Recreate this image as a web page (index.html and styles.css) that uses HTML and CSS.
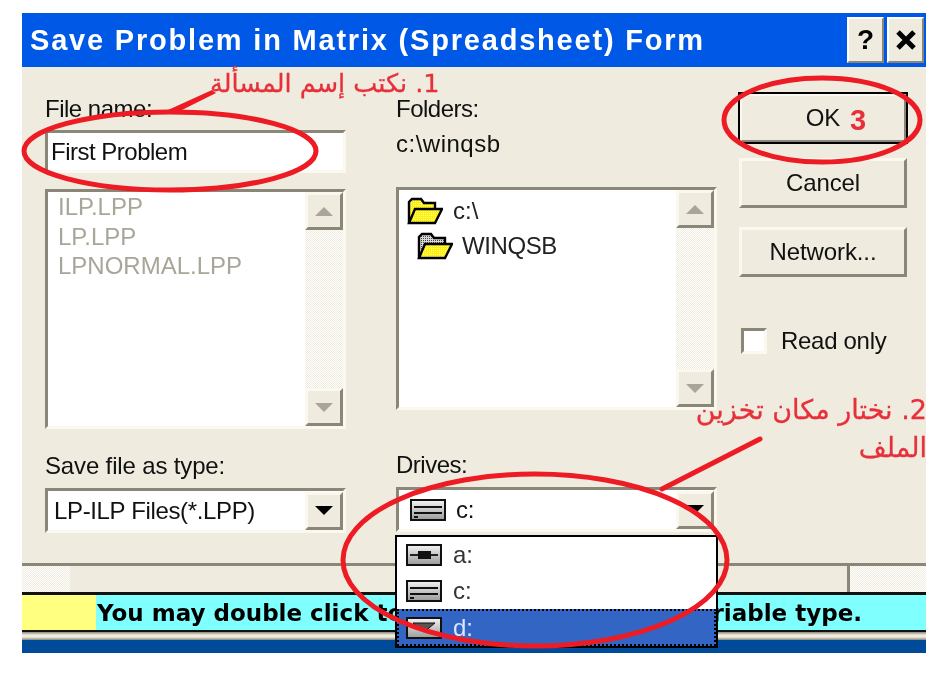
FILE: index.html
```html
<!DOCTYPE html>
<html lang="en">
<head>
    <meta charset="UTF-8">
    <meta name="viewport" content="width=device-width, initial-scale=1.0">
    <title>Save Problem in Matrix (Spreadsheet) Form</title>
    <link rel="stylesheet" href="styles.css">
</head>
<body>

    <!-- Shared icons -->
    <svg class="defs" width="0" height="0">
        <defs>
            <pattern id="dither" width="2" height="2" patternUnits="userSpaceOnUse">
                <rect width="2" height="2" fill="#fff200"/>
                <rect width="1" height="1" fill="#ffffb0"/>
            </pattern>
            <pattern id="ditherGrey" width="2" height="2" patternUnits="userSpaceOnUse">
                <rect width="2" height="2" fill="#d8d8d8"/>
                <rect width="1" height="1" fill="#444"/>
            </pattern>
            <linearGradient id="driveFace" x1="0" y1="0" x2="0" y2="1">
                <stop offset="0" stop-color="#f4f4f4"/>
                <stop offset="1" stop-color="#9a9a9a"/>
            </linearGradient>
            <symbol id="hdd" viewBox="0 0 36 22">
                <rect x="1" y="1" width="34" height="20" fill="url(#driveFace)" stroke="#111" stroke-width="2"/>
                <path d="M4 8h28M4 14h28" stroke="#111" stroke-width="2" fill="none"/>
                <path d="M4 18h4" stroke="#111" stroke-width="2" fill="none"/>
            </symbol>
            <symbol id="floppy" viewBox="0 0 36 22">
                <rect x="1" y="1" width="34" height="20" fill="url(#driveFace)" stroke="#111" stroke-width="2"/>
                <path d="M4 11h28" stroke="#222" stroke-width="2" fill="none"/>
                <rect x="12" y="7" width="13" height="8" fill="#111"/>
            </symbol>
            <symbol id="cdrom" viewBox="0 0 36 22">
                <rect x="1" y="1" width="34" height="20" fill="url(#driveFace)" stroke="#111" stroke-width="2"/>
                <path d="M7 6h22l-11 9z" fill="#555" stroke="#111"/>
            </symbol>
        </defs>
    </svg>

    <div class="dialog">
        <!-- Title bar -->
        <div class="titlebar">
            <h1>Save Problem in Matrix (Spreadsheet) Form</h1>
            <div class="caption-buttons">
                <span class="caption-btn">?</span>
                <span class="caption-btn">
                    <svg width="22" height="20" viewBox="0 0 22 20"><path d="M3 2l16 16M19 2L3 18" stroke="#000" stroke-width="5"/></svg>
                </span>
            </div>
        </div>

        <!-- Form body -->
        <div class="body">
            <div class="col col-file">
                <label class="label">File name:</label>
                <div class="input sunken">First Problem</div>
                <div class="list sunken">
                    <div class="list-items muted">
                        <div>ILP.LPP</div>
                        <div>LP.LPP</div>
                        <div>LPNORMAL.LPP</div>
                    </div>
                    <div class="scrollbar">
                        <span class="scroll-btn"><i class="arrow up"></i></span>
                        <span class="scroll-btn"><i class="arrow down"></i></span>
                    </div>
                </div>
                <label class="label type-label">Save file as type:</label>
                <div class="combo sunken">
                    <span class="combo-value">LP-ILP Files(*.LPP)</span>
                    <span class="scroll-btn"><i class="arrow down dark"></i></span>
                </div>
            </div>

            <div class="col col-folder">
                <label class="label">Folders:</label>
                <div class="path">c:\winqsb</div>
                <div class="list tree sunken">
                    <div class="list-items">
                        <div class="tree-row">
                            <svg width="36" height="28" viewBox="0 0 36 28">
                                <path d="M2 26V5l3-3h9l3 4h11v5" fill="url(#dither)" stroke="#000" stroke-width="2.4"/>
                                <path d="M2 26l6-14h27l-7 14z" fill="url(#dither)" stroke="#000" stroke-width="2.4"/>
                            </svg>
                            <span>c:\</span>
                        </div>
                        <div class="tree-row sub">
                            <svg width="36" height="28" viewBox="0 0 36 28">
                                <path d="M2 26V5l3-3h9l3 4h11v5" fill="url(#ditherGrey)" stroke="#000" stroke-width="2.4"/>
                                <path d="M2 26l6-14h27l-7 14z" fill="url(#dither)" stroke="#000" stroke-width="2.4"/>
                            </svg>
                            <span>WINQSB</span>
                        </div>
                    </div>
                    <div class="scrollbar">
                        <span class="scroll-btn"><i class="arrow up"></i></span>
                        <span class="scroll-btn"><i class="arrow down"></i></span>
                    </div>
                </div>
                <label class="label drives-label">Drives:</label>
                <div class="combo sunken">
                    <span class="combo-value drive">
                        <svg width="36" height="22"><use href="#hdd"/></svg>
                        c:
                    </span>
                    <span class="scroll-btn"><i class="arrow down dark"></i></span>
                </div>
            </div>

            <div class="col col-actions">
                <button class="btn btn-default">OK</button>
                <button class="btn">Cancel</button>
                <button class="btn">Network...</button>
                <div class="check">
                    <span class="checkbox sunken"></span>
                    <span>Read only</span>
                </div>
            </div>
        </div>

        <!-- Scrollbar behind the dialog -->
        <div class="hscroll">
            <span class="hscroll-left"></span>
            <span class="hscroll-mid"></span>
            <span class="hscroll-right"></span>
        </div>

        <!-- Status line, the middle of it is covered by the drive list -->
        <div class="status">
            <span class="status-flag"></span>
            <span class="status-text">You may double click to</span>
            <span class="status-text status-end">variable type.</span>
        </div>
        <div class="footer"></div>

        <!-- Open drive list -->
        <div class="dropdown">
            <div class="drive-row"><svg width="36" height="22"><use href="#floppy"/></svg>a:</div>
            <div class="drive-row"><svg width="36" height="22"><use href="#hdd"/></svg>c:</div>
            <div class="drive-row selected"><svg width="36" height="22"><use href="#cdrom"/></svg>d:</div>
        </div>

        <!-- Red hand annotations -->
        <p class="note note-1" dir="rtl">1. نكتب إسم المسألة</p>
        <p class="note note-2" dir="rtl">2. نختار مكان تخزين<br>الملف</p>
        <span class="note-3">3</span>
    </div>

    <svg class="marks" width="945" height="684" viewBox="0 0 945 684">
        <g fill="none" stroke="#ed1c24">
            <ellipse cx="170" cy="151" rx="146" ry="39" stroke-width="5"/>
            <ellipse cx="822" cy="120" rx="98" ry="42" stroke-width="5"/>
            <ellipse cx="535" cy="560" rx="192" ry="86" stroke-width="5"/>
            <path d="M662 489L760 439" stroke-width="5" stroke-linecap="round"/>
        </g>
        <path d="M168 110L212 90L216 93L180 111z" fill="#ed1c24"/>
    </svg>

</body>
</html>
```

FILE: styles.css
```css
/* Basic Reset */
* {
    margin: 0;
    padding: 0;
    box-sizing: border-box;
}
body {
    font-family: 'Liberation Sans', Arial, sans-serif;
    background-color: #fff;
    color: #111;
    width: 945px;
    height: 684px;
    overflow: hidden;
    position: relative;
}
.defs {
    position: absolute;
}

/* Dialog */
.dialog {
    position: relative;
    width: 904px;
    height: 640px;
    margin: 13px 0 0 22px;
    background: #efebdf;
    overflow: hidden;
    display: flex;
    flex-direction: column;
    filter: blur(0.5px);
}

/* Title Bar */
.titlebar {
    height: 54px;
    flex: none;
    background: #0058e6;
    display: flex;
    align-items: center;
    justify-content: space-between;
    padding: 0 2px 0 8px;
}
.titlebar h1 {
    font-size: 29px;
    font-weight: bold;
    color: #fff;
    letter-spacing: 1.8px;
}
.caption-buttons {
    display: flex;
    gap: 3px;
}
.caption-btn {
    width: 37px;
    height: 46px;
    background: #efebdf;
    border: 2px solid;
    border-color: #fff #8a8678 #8a8678 #fff;
    display: flex;
    align-items: center;
    justify-content: center;
    font-size: 28px;
    font-weight: bold;
    color: #000;
}

/* Form Columns */
.body {
    height: 496px;
    flex: none;
    display: flex;
    padding: 30px 0 0 23px;
}
.col {
    display: flex;
    flex-direction: column;
}
.col-file {
    width: 301px;
    margin-right: 50px;
}
.col-folder {
    width: 321px;
    margin-right: 22px;
}
.col-actions {
    width: 168px;
}
.label, .path {
    display: block;
    font-size: 24px;
    line-height: 24px;
    letter-spacing: -0.5px;
    height: 24px;
}
.path {
    margin-top: 11px;
    letter-spacing: 0.5px;
}

.sunken {
    background: #fff;
    border: 3px solid;
    border-color: #8a8678 #fbf8f0 #fbf8f0 #8a8678;
}
.input {
    height: 43px;
    margin-top: 9px;
    padding-left: 3px;
    font-size: 24px;
    line-height: 37px;
    letter-spacing: -0.5px;
}

/* List Boxes */
.list {
    height: 240px;
    margin-top: 16px;
    display: flex;
    justify-content: space-between;
}
.list-items {
    font-size: 24px;
    line-height: 29.5px;
    padding: 0 0 0 10px;
}
.muted {
    color: #a9a598;
}
.tree {
    height: 223px;
    margin-top: 31px;
}
.tree-row {
    display: flex;
    align-items: center;
    gap: 10px;
    height: 35px;
    color: #222;
}
.tree .list-items {
    padding: 3px 0 0 8px;
}
.sub {
    margin-left: 10px;
    gap: 9px;
    letter-spacing: -0.4px;
}
.type-label {
    margin-top: 25px;
    letter-spacing: -0.15px;
}
.drives-label {
    margin-top: 43px;
}
.scrollbar {
    width: 38px;
    flex: none;
    display: flex;
    flex-direction: column;
    justify-content: space-between;
    background: repeating-conic-gradient(#efebdf 0 25%, #fff 0 50%) 0 0 / 2px 2px;
}
.scroll-btn {
    width: 38px;
    height: 38px;
    flex: none;
    background: #efebdf;
    border: 3px solid;
    border-color: #fbf8f0 #8a8678 #8a8678 #fbf8f0;
    display: flex;
    align-items: center;
    justify-content: center;
}
.arrow {
    display: block;
    width: 0;
    height: 0;
    border-left: 9px solid transparent;
    border-right: 9px solid transparent;
}
.arrow.up {
    border-bottom: 9px solid #a9a598;
}
.arrow.down {
    border-top: 9px solid #a9a598;
}
.arrow.down.dark {
    border-top-color: #000;
}

/* Combo Boxes */
.combo {
    height: 45px;
    margin-top: 10px;
    display: flex;
    justify-content: space-between;
    align-items: center;
}
.combo-value {
    font-size: 24px;
    letter-spacing: -0.35px;
    padding-left: 6px;
}
.drive {
    display: flex;
    align-items: center;
    gap: 10px;
    padding-left: 11px;
}

/* Buttons */
.btn {
    height: 50px;
    width: 168px;
    background: #efebdf;
    border: 3px solid;
    border-color: #fbf8f0 #8a8678 #8a8678 #fbf8f0;
    font-family: inherit;
    font-size: 24px;
    letter-spacing: -0.1px;
    color: #111;
}
.btn + .btn {
    margin-top: 15px;
}
.btn:last-of-type {
    margin-top: 19px;
}
.btn-default {
    margin-top: -4px;
    outline: 2px solid #000;
    outline-offset: -1px;
}
.check {
    display: flex;
    align-items: center;
    gap: 14px;
    margin: 50px 0 0 2px;
    font-size: 24px;
    letter-spacing: -0.3px;
}
.checkbox {
    width: 26px;
    height: 26px;
}

/* Lower Strips */
.hscroll {
    height: 32px;
    flex: none;
    display: flex;
    border-top: 3px solid #8a8678;
    border-bottom: 3px solid #111;
}
.hscroll-left, .hscroll-right {
    background: repeating-conic-gradient(#efebdf 0 25%, #fff 0 50%) 0 0 / 2px 2px;
}
.hscroll-left {
    width: 48px;
}
.hscroll-mid {
    flex: 1;
    border-right: 3px solid #8a8678;
}
.hscroll-right {
    width: 76px;
}
.status {
    height: 37px;
    flex: none;
    display: flex;
    align-items: center;
    background: #80ffff;
    border-bottom: 2px solid #111;
}
.status-flag {
    width: 74px;
    height: 100%;
    background: #ffff80;
    margin-right: 1px;
}
.status-text {
    font-family: 'DejaVu Sans', sans-serif;
    font-size: 23px;
    font-weight: bold;
    color: #000;
}
.status-end {
    margin-left: auto;
    margin-right: 64px;
}
.footer {
    flex: 1;
    background: linear-gradient(#8a8678, #efebdf 3px, #efebdf 5px, #8a8678 8px, #004a9a 8px);
}

/* Open Drive List */
.dropdown {
    position: absolute;
    left: 373px;
    top: 522px;
    width: 323px;
    height: 113px;
    background: #fff;
    border: 2px solid #000;
}
.drive-row {
    height: 36px;
    display: flex;
    align-items: center;
    gap: 11px;
    padding-left: 9px;
    font-size: 24px;
    color: #333;
}
.drive-row.selected {
    height: 37px;
    background: #3366c4;
    color: #dde6ff;
    outline: 2px dotted #000;
    outline-offset: -2px;
}

/* Annotations */
.note {
    position: absolute;
    font-family: 'DejaVu Sans', sans-serif;
    color: #e8303a;
    white-space: nowrap;
    -webkit-text-stroke: 0.3px #e8303a;
}
.note-1 {
    left: 188px;
    top: 55px;
    font-size: 25.5px;
}
.note-2 {
    right: -1px;
    top: 378px;
    font-size: 27px;
    line-height: 38px;
}
.note-3 {
    position: absolute;
    left: 828px;
    top: 91px;
    font-size: 29px;
    font-weight: bold;
    color: #e8303a;
}
.marks {
    position: absolute;
    left: 0;
    top: 0;
    filter: blur(0.4px);
}
```
